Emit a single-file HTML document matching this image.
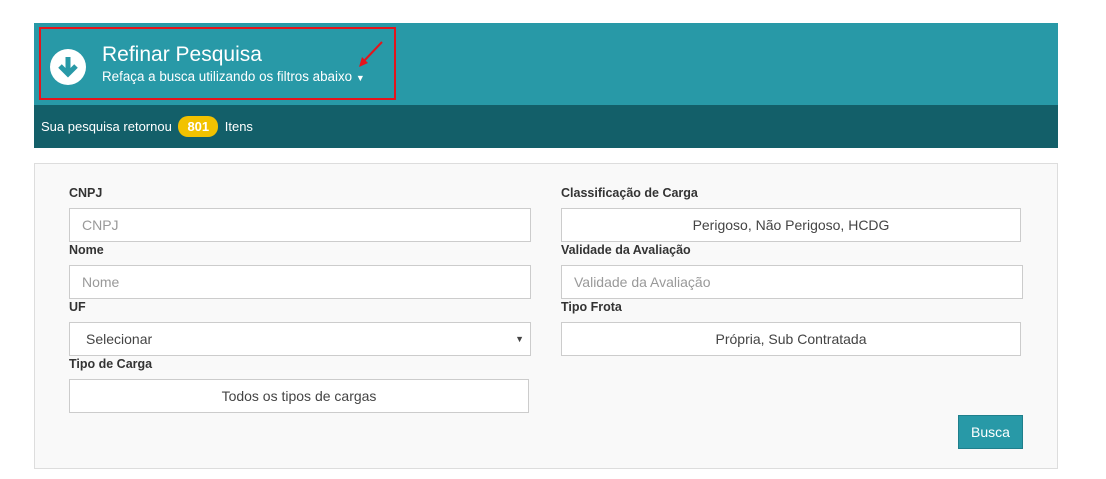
<!DOCTYPE html><html><head><style>
body{margin:0;width:1106px;height:479px;background:#fff;font-family:"Liberation Sans",sans-serif;position:relative;overflow:hidden}
.a{position:absolute}
.hdr{left:34px;top:23px;width:1024px;height:82px;background:#2899a7}
.band{left:34px;top:105px;width:1024px;height:43px;background:#135f69;color:#fff;font-size:13px}
.red{left:39px;top:27px;width:353px;height:69px;border:2px solid #e5141b}
.panel{left:34px;top:163px;width:1022px;height:304px;background:#f9f9f9;border:1px solid #ddd}
.lbl{font-size:12.5px;font-weight:bold;color:#333}
.in{background:#fff;border:1px solid #ccc;box-sizing:border-box;height:34px;font-size:14px;color:#999;line-height:32px;padding-left:12px}
.c{text-align:center;color:#444;padding:0}
</style></head><body>
<div class="a hdr"></div>
<div class="a red"></div>
<svg class="a" style="left:50px;top:49px" width="36" height="36" viewBox="0 0 36 36"><circle cx="18" cy="18" r="18" fill="#fff"/><path d="M18 8v17M10 17l8 8 8-8" stroke="#2899a7" stroke-width="5" fill="none" stroke-linejoin="miter"/></svg>
<div class="a" style="left:102px;top:43px;font-size:21px;color:#fff">Refinar Pesquisa</div>
<div class="a" style="left:102px;top:69px;font-size:13.4px;color:#fff">Refaça a busca utilizando os filtros abaixo <span style="font-size:9px">▼</span></div>
<svg class="a" style="left:355px;top:40px" width="30" height="30"><path d="M27 2L8 22" stroke="#e5141b" stroke-width="2"/><path d="M4 27l3-10 6 6z" fill="#e5141b"/></svg>
<div class="a band"><span class="a" style="left:7px;top:11px;white-space:nowrap">Sua pesquisa retornou <span style="display:inline-block;background:#f2c200;border-radius:10px;padding:3px 9px;font-weight:bold;margin:0 3px">801</span> Itens</span></div>
<div class="a panel"></div>
<div class="a lbl" style="left:69px;top:186px">CNPJ</div>
<div class="a in" style="left:69px;top:208px;width:462px">CNPJ</div>
<div class="a lbl" style="left:69px;top:243px">Nome</div>
<div class="a in" style="left:69px;top:265px;width:462px">Nome</div>
<div class="a lbl" style="left:69px;top:300px">UF</div>
<div class="a in" style="left:69px;top:322px;width:462px;color:#444;padding-left:16px">Selecionar<span style="position:absolute;right:6px;font-size:9px">▼</span></div>
<div class="a lbl" style="left:69px;top:357px">Tipo de Carga</div>
<div class="a in c" style="left:69px;top:379px;width:460px">Todos os tipos de cargas</div>
<div class="a lbl" style="left:561px;top:186px">Classificação de Carga</div>
<div class="a in c" style="left:561px;top:208px;width:460px">Perigoso, Não Perigoso, HCDG</div>
<div class="a lbl" style="left:561px;top:243px">Validade da Avaliação</div>
<div class="a in" style="left:561px;top:265px;width:462px">Validade da Avaliação</div>
<div class="a lbl" style="left:561px;top:300px">Tipo Frota</div>
<div class="a in c" style="left:561px;top:322px;width:460px">Própria, Sub Contratada</div>
<div class="a" style="left:958px;top:415px;width:65px;height:34px;background:#2899a7;border:1px solid #1f7f8c;box-sizing:border-box;color:#fff;font-size:14px;text-align:center;line-height:32px">Busca</div>
</body></html>
